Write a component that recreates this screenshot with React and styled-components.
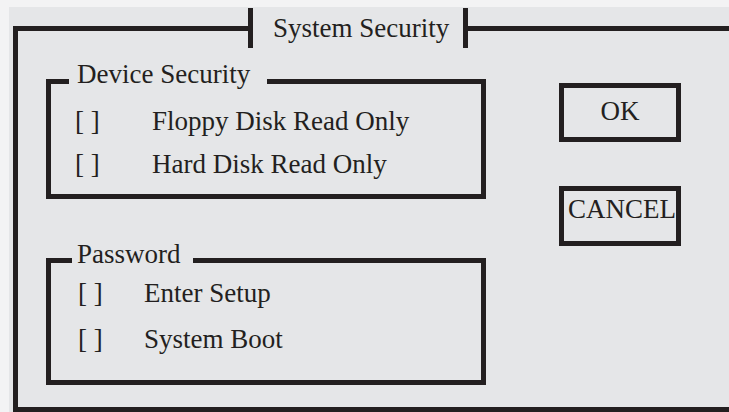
import React from 'react';
import styled, { createGlobalStyle } from 'styled-components';

const INK = '#231f20';

const Global = createGlobalStyle`
  html, body { margin: 0; padding: 0; background: #f3f3f4; }
  body {
    font-family: "Liberation Serif", "Times New Roman", serif;
    color: ${INK};
    -webkit-font-smoothing: antialiased;
  }
`;

const Panel = styled.div`
  margin: 7px 0 0 9px;
  width: 720px;
  height: 405px;
  box-sizing: border-box;
  padding: 1px 0 0 4px;
  background: #e5e6e8;
  overflow: hidden;
`;

const Frame = styled.fieldset`
  margin: 0;
  padding: 0;
  width: 716px;
  height: 404px;
  box-sizing: border-box;
  min-inline-size: 0;
  border: 5px solid ${INK};
  border-right: none;
  display: flex;
  align-items: flex-start;
`;

const Title = styled.legend`
  margin-left: 230px;
  padding: 0 14px 0 20px;
  height: 40px;
  box-sizing: border-box;
  line-height: 40px;
  font-size: 27px;
  border-left: 5px solid ${INK};
  border-right: 5px solid ${INK};
  white-space: nowrap;
`;

const Groups = styled.div`
  display: flex;
  flex-direction: column;
  gap: 45px;
  padding: 16px 0 0 28px;
`;

const Group = styled.fieldset`
  margin: 0;
  padding: 0;
  width: 440px;
  box-sizing: border-box;
  min-inline-size: 0;
  border: 5px solid ${INK};
`;

const GroupLabel = styled.legend`
  margin-left: ${p => p.$ml}px;
  padding: 0 ${p => p.$pr}px ${p => p.$pb}px ${p => p.$pl}px;
  font-size: 27px;
  line-height: 20px;
  white-space: nowrap;
`;

const Rows = styled.div`
  display: flex;
  flex-direction: column;
  gap: ${p => p.$gap}px;
  padding: ${p => p.$pt}px 0 ${p => p.$pb}px ${p => p.$pl}px;
`;

const Row = styled.div`
  display: flex;
  font-size: 27px;
  line-height: 30px;
  white-space: nowrap;
`;

const Check = styled.span`
  flex: 0 0 ${p => p.$w}px;
`;

const Buttons = styled.div`
  display: flex;
  flex-direction: column;
  gap: 44px;
  margin: 35px 0 0 73px;
`;

const Button = styled.button`
  width: 122px;
  height: ${p => p.$h}px;
  box-sizing: border-box;
  border: 5px solid ${INK};
  background: transparent;
  color: ${INK};
  font-family: inherit;
  font-size: 27px;
  line-height: 30px;
  display: flex;
  align-items: center;
  justify-content: ${p => (p.$left ? 'flex-start' : 'center')};
  padding: 0 0 ${p => p.$pb}px ${p => (p.$left ? 4 : 0)}px;
  white-space: nowrap;
  overflow: visible;
  cursor: pointer;
`;

const device = ['Floppy Disk Read Only', 'Hard Disk Read Only'];
const password = ['Enter Setup', 'System Boot'];

export default function App() {
  return (
    <>
      <Global />
      <Panel>
        <Frame>
          <Title>System Security</Title>
          <Groups>
            <Group>
              <GroupLabel $ml={18} $pl={8} $pr={17} $pb={15}>Device Security</GroupLabel>
              <Rows $pt={7} $pb={15} $pl={24} $gap={13}>
                {device.map(t => (
                  <Row key={t}>
                    <Check $w={77}>[ ]</Check>
                    <span>{t}</span>
                  </Row>
                ))}
              </Rows>
            </Group>
            <Group>
              <GroupLabel $ml={21} $pl={5} $pr={12} $pb={13}>Password</GroupLabel>
              <Rows $pt={1} $pb={26} $pl={27} $gap={16}>
                {password.map(t => (
                  <Row key={t}>
                    <Check $w={66}>[ ]</Check>
                    <span>{t}</span>
                  </Row>
                ))}
              </Rows>
            </Group>
          </Groups>
          <Buttons>
            <Button $h={59} $pb={3}>OK</Button>
            <Button $h={60} $pb={14} $left>CANCEL</Button>
          </Buttons>
        </Frame>
      </Panel>
    </>
  );
}
